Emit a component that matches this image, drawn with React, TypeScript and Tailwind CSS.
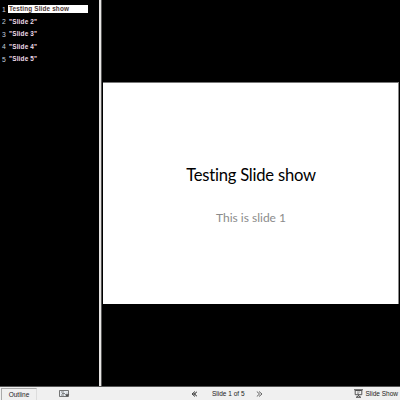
const slides = ['Testing Slide show', '"Slide 2"', '"Slide 3"', '"Slide 4"', '"Slide 5"'];

function OutlinePane() {
  return (
    <aside className="w-[99px] shrink-0 pt-[3px] pl-[2px] text-[6.4px] text-[#c4d0dc]">
      {slides.map((title, i) => (
        <div key={title} className="flex h-[12.5px] items-center leading-[8px]">
          <span className="w-[6px] shrink-0 pt-px text-[6.8px]">{i + 1}</span>
          <span
            className={
              i === 0
                ? 'h-[8px] w-[80px] whitespace-nowrap bg-white pl-px font-bold leading-[8px] tracking-[0.15px] text-[#4a3430]'
                : 'whitespace-nowrap pl-px font-bold tracking-[0.18px] text-[#f0dcea]'
            }
          >
            {title}
          </span>
        </div>
      ))}
    </aside>
  );
}

function Chevrons({ next = false }: { next?: boolean }) {
  return (
    <svg width="7" height="6" viewBox="0 0 7 6" fill="none" stroke="#404040">
      {next ? (
        <path d="M.8 .5 3.5 3 .8 5.5M3 .5 6 3 3 5.5" strokeWidth=".8" />
      ) : (
        <path d="M4 .5 1 3l3 2.5M6 .8 3.2 3 6 5.2M1.5 3H5" strokeWidth="1" />
      )}
    </svg>
  );
}

export default function App() {
  return (
    <div className="flex h-[400px] w-[400px] flex-col overflow-hidden bg-black font-['Liberation_Sans',Arial,sans-serif]">
      <div className="flex h-[386px]">
        <OutlinePane />
        <div className="w-[3px] shrink-0 border-r border-[#555] bg-[#e6e4e2]" />
        <main className="flex flex-1 flex-col pt-[82px] pl-px">
          <section className="flex h-[222px] w-[296px] flex-col items-center border-t border-r border-t-[#777] border-r-[#888] bg-white font-['Lato',sans-serif] [font-variant-ligatures:none]">
            <h1 className="mt-[81px] whitespace-nowrap pl-px text-[16.6px] leading-[22px] tracking-[-0.22px] text-black">
              Testing Slide show
            </h1>
            <p className="mt-[23px] whitespace-nowrap pl-px text-[12px] leading-[18px] text-[#8b8b8b]">This is slide 1</p>
          </section>
        </main>
      </div>
      <footer className="flex h-[14px] items-center border-t border-[#555] bg-[#f0f0f0] text-[6.5px] text-[#222]">
        <div className="mt-px ml-px flex h-full w-[36px] items-center justify-center border-t border-r border-l border-t-[#aaa] border-r-[#ddd] border-l-[#aaa] pt-px">
          Outline
        </div>
        <svg className="ml-[22px]" width="11" height="9" viewBox="0 0 11 9" fill="none" stroke="#555">
          <path d="M.5 1.5h9v6h-9z" fill="#e8edf2" strokeWidth=".8" />
          <path d="M2 3h3M3 4.5h3M2 6h3" strokeWidth=".7" />
          <path d="M8 3.5v3M6.2 5.5h3.6L8 7.5z" fill="#333" strokeWidth=".4" />
        </svg>
        <div className="ml-[121px] flex w-[72px] items-center">
          <Chevrons />
          <span className="ml-[14px] w-[44px] shrink-0 whitespace-nowrap">Slide 1 of 5</span>
          <Chevrons next />
        </div>
        <div className="mr-[2px] ml-auto flex items-center gap-[2px] whitespace-nowrap">
          <svg width="9" height="9" viewBox="0 0 9 9" fill="none" stroke="#444">
            <path d="M0 .8h9" />
            <path d="M1.2 1.5h6.6v4.2H1.2zM4.5 5.7v1M2.2 8.3l2.3-1.6 2.3 1.6z" strokeWidth=".9" />
            <path d="M3 3h3M3 4.3h2" strokeWidth=".5" />
          </svg>
          <span>Slide Show</span>
        </div>
      </footer>
    </div>
  );
}
